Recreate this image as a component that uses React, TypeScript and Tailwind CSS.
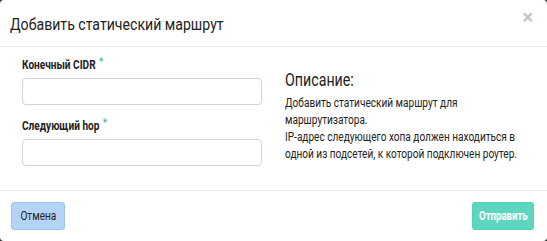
import React from 'react';

// Narrow text: the reference font is a condensed face, none is installed, so Roboto is squeezed
const Narrow: React.FC<{ children: React.ReactNode; className?: string }> = ({ children, className = '' }) => (
    <span className={`inline-block origin-left whitespace-nowrap ${className}`}>{children}</span>
);

const Field: React.FC<{ label: string; className?: string }> = ({ label, className }) => (
    <div className={className}>
        <label className="block text-[12px] font-bold text-[#222] h-[16px] leading-[16px]">
            <Narrow className="scale-x-[0.84]">
                {label}
                <span className="relative -top-[4px] ml-[4px] text-[#29c3a6] text-[11px]">*</span>
            </Narrow>
        </label>
        <input type="text" className="mt-[5px] w-[240px] h-[27px] rounded-[4px] border border-[#d4d4d4] bg-white px-2 text-[12px] outline-none" />
    </div>
);

const App: React.FC = () => {
    return (
        <div className="w-[547px] h-[241px] bg-[#2f2f2f] font-['Roboto',sans-serif] overflow-hidden">
            <div className="w-full h-full bg-white rounded-[4px] flex flex-col">
                <div className="h-[47px] border-b border-[#e5e5e5] flex items-start justify-between pl-[10px] pr-[14px] overflow-hidden">
                    <h2 className="text-[17px] text-[#222] leading-[24px] pt-[12px]">
                        <Narrow className="scale-x-[0.83]">Добавить статический маршрут</Narrow>
                    </h2>
                    <button className="mt-[7px] text-[#c4c4c4] text-[20px] font-bold leading-none">×</button>
                </div>
                <div className="h-[144px] flex pl-[22px] pt-[10px] border-b border-[#e5e5e5]">
                    <div className="w-[240px] flex flex-col">
                        <Field label="Конечный CIDR" />
                        <Field label="Следующий hop" className="mt-[13px]" />
                    </div>
                    <div className="ml-[23px] pt-[11px] text-[#222]">
                        <h3 className="text-[18px] leading-[24px] mb-[3px]">
                            <Narrow className="scale-x-[0.79]">Описание:</Narrow>
                        </h3>
                        <p className="text-[12px] leading-[17px] w-[250px] overflow-hidden">
                            <span className="inline-block origin-left scale-x-[0.84] w-[290px]">
                                Добавить статический маршрут для маршрутизатора.
                                <br />
                                IP-адрес следующего хопа должен находиться в одной из подсетей, к которой подключен роутер.
                            </span>
                        </p>
                    </div>
                </div>
                <div className="flex-1 flex items-center justify-between pl-[11px] pr-[13px]">
                    <button className="h-[28px] w-[54px] rounded-[3px] border border-[#9fc2f0] bg-[#b5d2f7] text-[12px] text-[#222] flex items-center justify-center">
                        <span className="inline-block scale-x-[0.84] whitespace-nowrap">Отмена</span>
                    </button>
                    <button className="h-[28px] w-[62px] rounded-[3px] border border-[#55cfb8] bg-[#5dd6c0] text-[12px] font-bold text-white flex items-center justify-center">
                        <span className="inline-block scale-x-[0.8] whitespace-nowrap">Отправить</span>
                    </button>
                </div>
            </div>
        </div>
    );
};

export default App;
